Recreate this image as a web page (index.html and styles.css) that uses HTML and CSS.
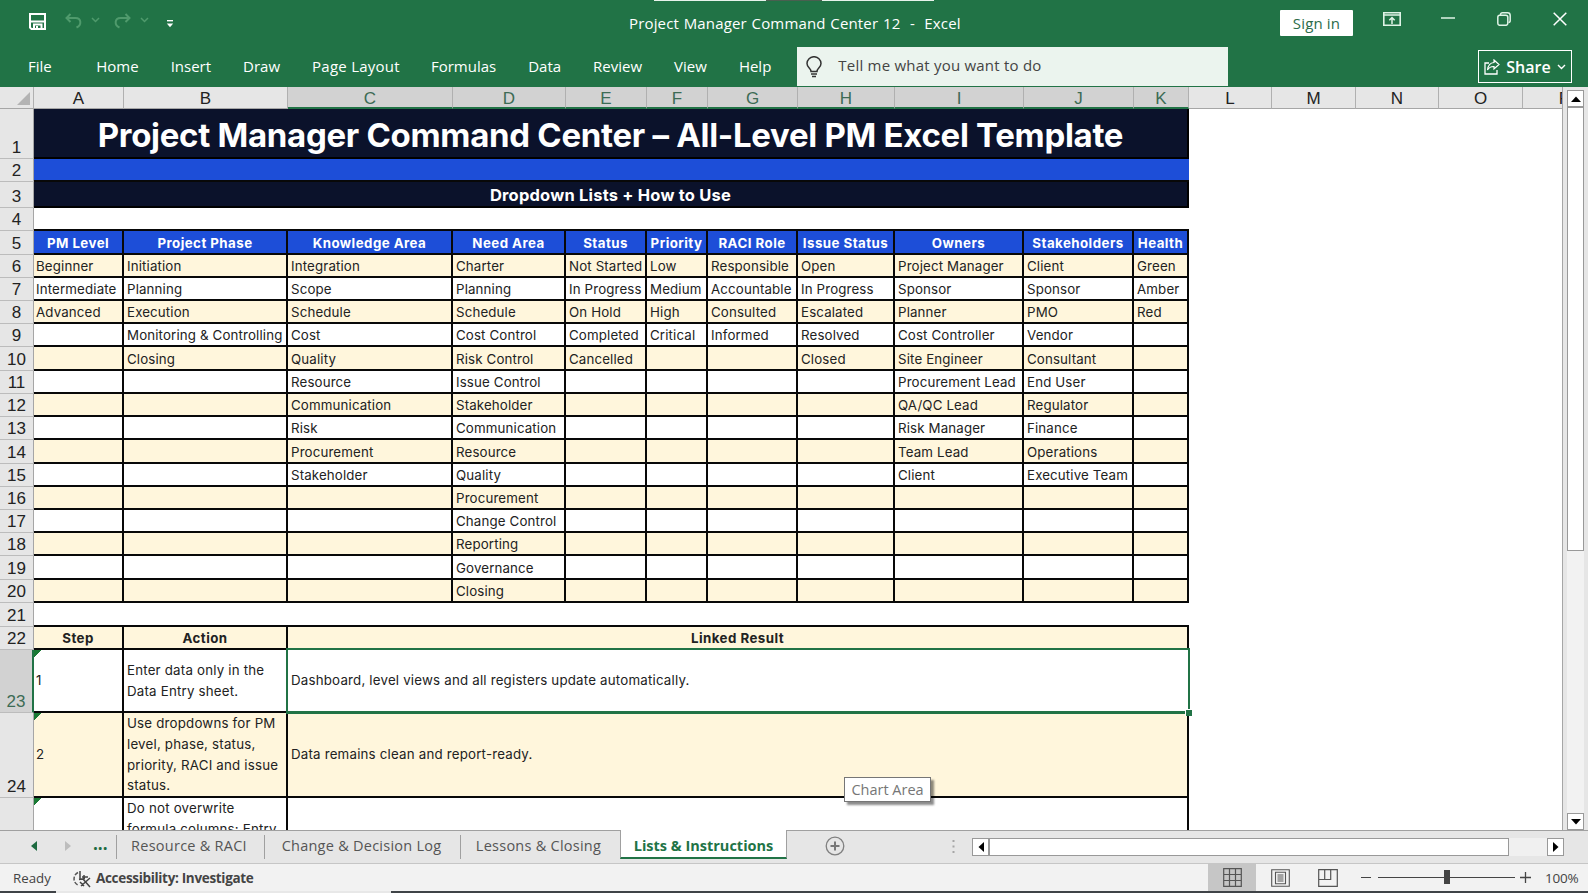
FILE: index.html
```html
<!DOCTYPE html>
<html lang="en">
<head>
    <meta charset="UTF-8">
    <meta name="viewport" content="width=device-width, initial-scale=1.0">
    <title>Project Manager Command Center 12 - Excel</title>
    <link rel="stylesheet" href="styles.css">
</head>
<body>

    <header class="titlebar">
        <div class="top-strip"><i></i><b></b><i></i></div>
        <div class="quick">
            <svg class="save" width="17" height="17" viewBox="0 0 17 17"><path d="M1 1h15v15H2.500L1 14.500zM1 8.500h15M5 16v-4.500h7.500V16" fill="none" stroke="#fff" stroke-width="2"/><path d="M7 13h2v3H7z" fill="#fff"/></svg>
            <svg class="undo" width="17" height="16" viewBox="0 0 17 16"><path d="M5.500 1L1.500 5L5.500 9M2 5h8.500c6 0 6.500 7 1 9.500" fill="none" stroke="#4f9a6c" stroke-width="2"/></svg>
            <svg class="caret" width="9" height="6" viewBox="0 0 9 6"><path d="M1 1l3.500 3.500L8 1" fill="none" stroke="#4f9a6c" stroke-width="1.500"/></svg>
            <svg class="redo" width="17" height="16" viewBox="0 0 17 16"><path d="M11.500 1l4 4l-4 4M15 5H6.500C.5 5 0 12 5.500 14.500" fill="none" stroke="#4f9a6c" stroke-width="2"/></svg>
            <svg class="caret" width="9" height="6" viewBox="0 0 9 6"><path d="M1 1l3.500 3.500L8 1" fill="none" stroke="#4f9a6c" stroke-width="1.500"/></svg>
            <svg class="more" width="8" height="8" viewBox="0 0 8 8"><path d="M1 .7h6" stroke="#fff" stroke-width="1.400"/><path d="M.8 3.500h6.400L4 7.200z" fill="#fff"/></svg>
        </div>
        <div class="doc-title">Project Manager Command Center 12&nbsp; -&nbsp; Excel</div>
        <div class="window-tools">
            <button class="signin">Sign in</button>
            <svg class="w-ribbon" width="18" height="14" viewBox="0 0 18 14"><path d="M.8.8h16.400v12.400H.8zM.8 3h16.400" fill="none" stroke="#dff3e6" stroke-width="1.600"/><path d="M9 12V6M6.300 8.300L9 5.600l2.700 2.700" fill="none" stroke="#dff3e6" stroke-width="1.500"/></svg>
            <svg class="w-min" width="14" height="14" viewBox="0 0 14 14"><path d="M0 6h14" stroke="#dff3e6" stroke-width="1.500"/></svg>
            <svg class="w-max" width="14" height="14" viewBox="0 0 14 14"><rect x=".8" y="3.300" width="10" height="10" rx="2" fill="none" stroke="#dff3e6" stroke-width="1.500"/><path d="M3.500 3V2.500Q3.500.8 5.500.8H10.500Q13.200.8 13.200 3.500V8.500Q13.200 10.500 11.500 10.500" fill="none" stroke="#dff3e6" stroke-width="1.500"/></svg>
            <svg class="w-close" width="14" height="14" viewBox="0 0 14 14"><path d="M.7.7l12.600 12.600M13.300.7L.7 13.300" stroke="#fff" stroke-width="1.500"/></svg>
        </div>
    </header>

    <nav class="ribbon">
        <a class="file">File</a>
        <a>Home</a>
        <a>Insert</a>
        <a>Draw</a>
        <a class="layout">Page Layout</a>
        <a>Formulas</a>
        <a>Data</a>
        <a>Review</a>
        <a>View</a>
        <a>Help</a>
        <div class="tellme">
            <svg width="16" height="22" viewBox="0 0 16 22"><path d="M5 15.500C5 12.500 1 11.500 1 7.500a7 6.800 0 0 1 14 0c0 4-4 5-4 8zM5 18h6M6 20.500h4" fill="none" stroke="#333" stroke-width="1.500"/></svg>
            <span>Tell me what you want to do</span>
        </div>
        <button class="share">
            <svg width="16" height="16" viewBox="0 0 16 16"><path d="M5 4H1v11h12v-4" fill="none" stroke="#fff" stroke-width="1.300"/><path d="M10 1l5 4.500-5 4.500V7.500C7 7.300 5 8.500 3.500 11 4 6.500 6 3.800 10 3.500z" fill="none" stroke="#fff" stroke-width="1.200"/></svg>
            <span>Share</span>
            <svg width="9" height="6" viewBox="0 0 9 6"><path d="M1 1l3.500 3.500L8 1" fill="none" stroke="#fff" stroke-width="1.400"/></svg>
        </button>
    </nav>

    <main class="workspace">
        <div class="sheet">
            <table>
                <colgroup>
                    <col class="c-num"><col class="c-a"><col class="c-b"><col class="c-c"><col class="c-d"><col class="c-e"><col class="c-f"><col class="c-g"><col class="c-h"><col class="c-i"><col class="c-j"><col class="c-k"><col class="c-l"><col class="c-m"><col class="c-l"><col class="c-m"><col class="c-m">
                </colgroup>
                <tr class="letters">
                    <th class="corner"><svg width="13" height="13" viewBox="0 0 13 13"><path d="M13 0v13H0z" fill="#b3b3b3"/></svg></th>
                    <th>A</th><th>B</th>
                    <th class="on">C</th><th class="on">D</th><th class="on">E</th><th class="on">F</th><th class="on">G</th><th class="on">H</th><th class="on">I</th><th class="on">J</th><th class="on">K</th>
                    <th>L</th><th>M</th><th>N</th><th>O</th><th>P</th>
                </tr>
                <tr class="r-title"><th>1</th><td colspan="11">Project Manager Command Center – All-Level PM Excel Template</td></tr>
                <tr class="r-blue"><th>2</th><td colspan="11"></td></tr>
                <tr class="r-sub"><th>3</th><td colspan="11">Dropdown Lists + How to Use</td></tr>
                <tr class="r-gap"><th>4</th><td colspan="11"></td></tr>
                <tr class="r-head"><th>5</th><td>PM Level</td><td>Project Phase</td><td>Knowledge Area</td><td>Need Area</td><td>Status</td><td>Priority</td><td>RACI Role</td><td>Issue Status</td><td>Owners</td><td>Stakeholders</td><td>Health</td></tr>
                <tr class="cream"><th>6</th><td>Beginner</td><td>Initiation</td><td>Integration</td><td>Charter</td><td>Not Started</td><td>Low</td><td>Responsible</td><td>Open</td><td>Project Manager</td><td>Client</td><td>Green</td></tr>
                <tr><th>7</th><td>Intermediate</td><td>Planning</td><td>Scope</td><td>Planning</td><td>In Progress</td><td>Medium</td><td>Accountable</td><td>In Progress</td><td>Sponsor</td><td>Sponsor</td><td>Amber</td></tr>
                <tr class="cream"><th>8</th><td>Advanced</td><td>Execution</td><td>Schedule</td><td>Schedule</td><td>On Hold</td><td>High</td><td>Consulted</td><td>Escalated</td><td>Planner</td><td>PMO</td><td>Red</td></tr>
                <tr><th>9</th><td></td><td>Monitoring &amp; Controlling</td><td>Cost</td><td>Cost Control</td><td>Completed</td><td>Critical</td><td>Informed</td><td>Resolved</td><td>Cost Controller</td><td>Vendor</td><td></td></tr>
                <tr class="cream tall"><th>10</th><td></td><td>Closing</td><td>Quality</td><td>Risk Control</td><td>Cancelled</td><td></td><td></td><td>Closed</td><td>Site Engineer</td><td>Consultant</td><td></td></tr>
                <tr><th>11</th><td></td><td></td><td>Resource</td><td>Issue Control</td><td></td><td></td><td></td><td></td><td>Procurement Lead</td><td>End User</td><td></td></tr>
                <tr class="cream"><th>12</th><td></td><td></td><td>Communication</td><td>Stakeholder</td><td></td><td></td><td></td><td></td><td>QA/QC Lead</td><td>Regulator</td><td></td></tr>
                <tr><th>13</th><td></td><td></td><td>Risk</td><td>Communication</td><td></td><td></td><td></td><td></td><td>Risk Manager</td><td>Finance</td><td></td></tr>
                <tr class="cream tall"><th>14</th><td></td><td></td><td>Procurement</td><td>Resource</td><td></td><td></td><td></td><td></td><td>Team Lead</td><td>Operations</td><td></td></tr>
                <tr><th>15</th><td></td><td></td><td>Stakeholder</td><td>Quality</td><td></td><td></td><td></td><td></td><td>Client</td><td>Executive Team</td><td></td></tr>
                <tr class="cream"><th>16</th><td></td><td></td><td></td><td>Procurement</td><td></td><td></td><td></td><td></td><td></td><td></td><td></td></tr>
                <tr><th>17</th><td></td><td></td><td></td><td>Change Control</td><td></td><td></td><td></td><td></td><td></td><td></td><td></td></tr>
                <tr class="cream"><th>18</th><td></td><td></td><td></td><td>Reporting</td><td></td><td></td><td></td><td></td><td></td><td></td><td></td></tr>
                <tr class="tall"><th>19</th><td></td><td></td><td></td><td>Governance</td><td></td><td></td><td></td><td></td><td></td><td></td><td></td></tr>
                <tr class="cream"><th>20</th><td></td><td></td><td></td><td>Closing</td><td></td><td></td><td></td><td></td><td></td><td></td><td></td></tr>
                <tr class="r-gap tall"><th>21</th><td colspan="11"></td></tr>
                <tr class="r-steps"><th>22</th><td>Step</td><td>Action</td><td colspan="9">Linked Result</td></tr>
                <tr class="r-one"><th class="on">23</th><td class="flag">1</td><td>Enter data only in the Data Entry sheet.</td><td colspan="9" class="selected">Dashboard, level views and all registers update automatically.<i class="outline"></i><i class="handle"></i></td></tr>
                <tr class="r-two cream"><th>24</th><td class="flag">2</td><td>Use dropdowns for PM level, phase, status, priority, RACI and issue status.</td><td colspan="9">Data remains clean and report-ready.</td></tr>
                <tr class="r-three"><th></th><td class="flag"></td><td>Do not overwrite<br>formula columns: Entry</td><td colspan="9"></td></tr>
            </table>
            <div class="tooltip">Chart Area</div>
        </div>
        <div class="vscroll">
            <div class="sbtn"><svg width="10" height="6" viewBox="0 0 10 6"><path d="M0 6l5-5.500L10 6z"/></svg></div>
            <div class="vthumb"></div>
            <div class="sbtn down"><svg width="10" height="6" viewBox="0 0 10 6"><path d="M0 0l5 5.500L10 0z"/></svg></div>
        </div>
    </main>

    <div class="tabs">
        <div class="tab-nav">
            <svg width="6" height="10" viewBox="0 0 6 10"><path d="M6 0v10L0 5z" fill="#1e6b41"/></svg>
            <svg width="6" height="10" viewBox="0 0 6 10"><path d="M0 0v10l6-5z" fill="#bdbdbd"/></svg>
            <span>...</span>
        </div>
        <div class="tab t1">Resource &amp; RACI</div>
        <div class="tab t2">Change &amp; Decision Log</div>
        <div class="tab t3">Lessons &amp; Closing</div>
        <div class="tab active">Lists &amp; Instructions</div>
        <svg class="add" width="20" height="20" viewBox="0 0 20 20"><circle cx="10" cy="10" r="8.800" fill="none" stroke="#808080" stroke-width="1.300"/><path d="M10 5.500v9M5.500 10h9" stroke="#777" stroke-width="2"/></svg>
        <svg class="grip" width="3" height="13" viewBox="0 0 3 13"><path d="M.5 0h2v2h-2zM.5 5.500h2v2h-2zM.5 11h2v2h-2z" fill="#a6a6a6"/></svg>
        <div class="hscroll">
            <div class="sbtn"><svg width="6" height="10" viewBox="0 0 6 10"><path d="M6 0v10L.5 5z"/></svg></div>
            <div class="hthumb"></div>
            <div class="sbtn right"><svg width="6" height="10" viewBox="0 0 6 10"><path d="M0 0v10l5.500-5z"/></svg></div>
        </div>
    </div>

    <footer class="status">
        <span class="ready">Ready</span>
        <svg class="acc-icon" width="20" height="18" viewBox="0 0 20 18"><path d="M6 2.500A7 7 0 0 0 7 15.500" fill="none" stroke="#555" stroke-width="1.500" stroke-dasharray="4 1.500"/><path d="M8 1v8M7 9.500l6-1M12 5v4M10 7h6M9 16l9-8M10.500 8.500L18 17M8 12l4 4" fill="none" stroke="#444" stroke-width="1.500"/></svg>
        <span class="acc">Accessibility: Investigate</span>
        <div class="view on"><svg width="19" height="19" viewBox="0 0 19 19"><path d="M.7.700h17.600v17.600H.7zM6.500.7v17.600M12.500.7v17.600M.7 6.500h17.600M.7 12.500h17.600" fill="none" stroke="#555" stroke-width="1.200"/></svg></div>
        <div class="view"><svg width="19" height="18" viewBox="0 0 19 18"><path d="M.7.7h17.600v16.600H.7zM4.500 3.200h10v11.600h-10zM6.500 6h6M6.500 8h6M6.500 10h6M6.500 12h6" fill="none" stroke="#555" stroke-width="1.100"/></svg></div>
        <div class="view"><svg width="20" height="18" viewBox="0 0 20 18"><path d="M.7.7h18.600v16.600H.7zM.7 10.500h12V.7M6.700.7v9.800" fill="none" stroke="#555" stroke-width="1.200"/></svg></div>
        <div class="zoom-minus"></div>
        <div class="slider"><i></i></div>
        <svg class="zoom-plus" width="11" height="11" viewBox="0 0 11 11"><path d="M5.500 0v11M0 5.500h11" stroke="#444" stroke-width="1.300"/></svg>
        <span class="percent">100%</span>
    </footer>
    <div class="taskline"></div>

</body>
</html>
```
FILE: styles.css
```css
* {
    box-sizing: border-box;
}
body {
    margin: 0;
    width: 1588px;
    height: 893px;
    overflow: hidden;
    display: flex;
    flex-direction: column;
    background-color: #e6e6e6;
    font-family: "Open Sans", "Noto Sans", sans-serif;
}
svg {
    display: block;
    flex: none;
}
button {
    font-family: inherit;
}

/* title bar */
.titlebar {
    position: relative;
    height: 47px;
    flex: none;
    background-color: #217346;
    color: #fff;
}
.top-strip {
    position: absolute;
    top: 0;
    left: 654px;
    display: flex;
}
.top-strip i {
    width: 112px;
    height: 1px;
    background-color: #e8f3ec;
}
.top-strip b {
    width: 56px;
    height: 1px;
    background-color: #4a5f50;
}
.quick {
    position: absolute;
    left: 29px;
    top: 12px;
    height: 18px;
    display: flex;
    align-items: center;
}
.undo {
    margin-left: 19px;
}
.redo {
    margin-left: 14px;
}
.caret {
    margin-left: 9px;
    margin-top: -2px;
}
.more {
    margin-left: 17px;
    margin-top: 5px;
}
.doc-title {
    position: absolute;
    left: 629px;
    top: 11px;
    font-size: 15px;
    line-height: 24px;
    white-space: nowrap;
    letter-spacing: 0.15px;
    word-spacing: 0.7px;
}
.window-tools {
    position: absolute;
    left: 1280px;
    top: 10px;
    display: flex;
}
.signin {
    width: 73px;
    height: 26px;
    padding: 0;
    border: none;
    border-radius: 1px;
    background-color: #fff;
    color: #2b6c4a;
    font-size: 15px;
    letter-spacing: 0.15px;
}
.w-ribbon {
    margin: 2px 0 0 30px;
}
.w-min {
    margin: 2px 0 0 40px;
}
.w-max {
    margin: 2px 0 0 42px;
}
.w-close {
    margin: 2px 0 0 42px;
}

/* ribbon */
.ribbon {
    height: 40px;
    flex: none;
    display: flex;
    align-items: center;
    padding: 0 16px 0 28px;
    gap: 32px;
    background-color: #217346;
    color: #fff;
    font-size: 15px;
}
.ribbon a {
    margin-top: -2px;
    white-space: nowrap;
}
.ribbon .file {
    margin-right: 12.5px;
}
.ribbon .layout {
    margin-right: -1px;
    letter-spacing: 0.25px;
}
.tellme {
    width: 431px;
    height: 39px;
    flex: none;
    margin-left: -6px;
    margin-bottom: 1px;
    padding-left: 9px;
    display: flex;
    align-items: center;
    gap: 16px;
    background-color: #ebf4ee;
    color: #444;
}
.tellme span {
    margin-top: -3px;
    letter-spacing: 0.22px;
}
.share {
    margin-left: auto;
    margin-bottom: 1px;
    width: 94px;
    height: 33px;
    padding: 0 5px;
    display: flex;
    align-items: center;
    justify-content: space-between;
    border: 1px solid #fff;
    background: none;
    color: #fff;
    font-size: 16px;
    font-weight: 600;
}

/* sheet */
.workspace {
    height: 743px;
    flex: none;
    display: flex;
}
.sheet {
    position: relative;
    width: 1563px;
    overflow: hidden;
    background-color: #fff;
    border-right: 1px solid #a6a6a6;
}
table {
    width: 1607px;
    table-layout: fixed;
    border-collapse: separate;
    border-spacing: 0;
}
.c-num { width: 34px; }
.c-a { width: 90px; }
.c-b { width: 164px; }
.c-c { width: 165px; }
.c-d { width: 113px; }
.c-e { width: 81px; }
.c-f { width: 61px; }
.c-g { width: 90px; }
.c-h { width: 97px; }
.c-i { width: 129px; }
.c-j { width: 110px; }
.c-k { width: 55px; }
.c-l { width: 83px; }
.c-m { width: 84px; }

tr {
    height: 23px;
}
tr.tall {
    height: 24px;
}
th {
    padding: 0 0 1px;
    background-color: #e6e6e6;
    border-right: 1px solid #a6a6a6;
    border-bottom: 1px solid #bcbcbc;
    color: #222;
    font-family: "Liberation Sans", Arial, sans-serif;
    font-size: 17px;
    font-weight: normal;
    line-height: 18px;
    vertical-align: bottom;
}
th.on {
    background-color: #d2d2d2;
    color: #3d6b55;
    border-right: 2px solid #217346;
}
.letters {
    height: 22px;
}
.letters th {
    padding: 0;
    border-right: 1px solid #b0b0b0;
    border-bottom: 1px solid #a6a6a6;
}
.letters th.on {
    border-bottom: 2px solid #217346;
    line-height: 17px;
}
.corner svg {
    margin: 0 0 3px 17px;
}
td {
    padding: 1px 0 0 3px;
    border-right: 2px solid #080808;
    border-bottom: 2px solid #080808;
    background-color: #fff;
    color: #222;
    font-family: Inter, "Open Sans", sans-serif;
    font-size: 13.3px;
    letter-spacing: 0.14px;
    line-height: 20px;
    white-space: nowrap;
}
td:nth-child(2) {
    padding-left: 2px;
}
.cream td {
    background-color: #fff6dc;
}
.r-title {
    height: 50px;
}
.r-title td,
.r-sub td {
    background-color: #0b122b;
    border-color: #000;
    color: #fff;
    text-align: center;
    font-weight: bold;
}
.r-title td {
    padding: 3px 0 0;
    font-size: 33px;
    letter-spacing: -0.3px;
    line-height: 40px;
}
.r-blue td {
    background-color: #1d4ed8;
    border-right: none;
}
.r-sub {
    height: 26px;
}
.r-sub td {
    padding: 2px 0 0;
    font-size: 16.5px;
    letter-spacing: 0.2px;
}
.r-gap td {
    border-right: none;
}
.r-head {
    height: 24px;
}
.r-head td {
    padding: 1px 0 0;
    background-color: #1d4ed8;
    color: #fff;
    text-align: center;
    font-weight: bold;
    letter-spacing: 0.45px;
}
.r-steps td {
    padding: 0;
    background-color: #fff6dc;
    text-align: center;
    font-weight: bold;
    letter-spacing: 0.45px;
}
.r-one {
    height: 63px;
}
.r-two {
    height: 85px;
}
.r-three {
    height: 85px;
}
.r-one td,
.r-two td,
.r-three td {
    padding-top: 0;
    line-height: 20.7px;
    white-space: normal;
    letter-spacing: 0.2px;
}
.r-three td {
    vertical-align: top;
}
.flag {
    background-image: linear-gradient(135deg, #1a7a35 5px, transparent 5.500px);
}
.selected {
    position: relative;
    border-right-color: #fff;
    border-bottom-color: #217346;
}
.outline {
    position: absolute;
    top: -2px;
    left: -2px;
    right: -3px;
    bottom: -3px;
    border: 2px solid #217346;
}
.handle {
    position: absolute;
    right: -5px;
    bottom: -5px;
    width: 7px;
    height: 7px;
    border: 1px solid #fff;
    border-right: none;
    border-bottom: none;
    background-color: #217346;
}
.tooltip {
    position: absolute;
    left: 844px;
    top: 690px;
    width: 87px;
    height: 25px;
    border: 1px solid #767676;
    background-color: #fff;
    box-shadow: 3px 3px 2px rgba(0, 0, 0, 0.45);
    color: #767676;
    font-size: 14.5px;
    line-height: 24px;
    text-align: center;
    white-space: nowrap;
}

/* scrollbars */
.vscroll {
    width: 17px;
    margin: 3px 0 0 4px;
    display: flex;
    flex-direction: column;
    background-color: #f2f2f2;
}
.sbtn {
    width: 17px;
    height: 17px;
    flex: none;
    display: flex;
    align-items: center;
    justify-content: center;
    border: 1px solid #999;
    background-color: #fff;
}
.vthumb {
    height: 444px;
    border: 1px solid #999;
    background-color: #fff;
}
.down {
    margin-top: auto;
}

/* sheet tabs */
.tabs {
    height: 34px;
    flex: none;
    display: flex;
    border-top: 1px solid #a0a0a0;
    border-bottom: 1px solid #c6c6c6;
    background-color: #e6e6e6;
    color: #555;
    font-size: 14.5px;
}
.tab-nav {
    width: 116px;
    height: 30px;
    padding-left: 31px;
    display: flex;
    align-items: center;
    gap: 28px;
}
.tab-nav span {
    margin: -6px 0 0 -6px;
    color: #1e6b41;
    font-weight: bold;
    font-size: 17px;
}
.tab {
    height: 24px;
    margin-top: 4px;
    line-height: 22px;
    border-left: 1px solid #a0a0a0;
    text-align: center;
    white-space: nowrap;
    letter-spacing: 0.25px;
}
.t1 {
    width: 148px;
    padding-right: 3px;
}
.t2 {
    width: 196px;
    padding-right: 2px;
}
.t3 {
    width: 160px;
    padding-right: 4px;
}
.active {
    width: 167px;
    height: 29px;
    margin-top: -1px;
    line-height: 32px;
    border-right: 1px solid #a0a0a0;
    border-bottom: 2px solid #217346;
    background-color: #fff;
    color: #217346;
    font-weight: bold;
    letter-spacing: 0;
}
.add {
    margin: 5px 0 0 38px;
}
.grip {
    margin: 9px 0 0 107px;
}
.hscroll {
    width: 592px;
    height: 18px;
    margin: 7px 0 0 17px;
    display: flex;
    background-color: #f0f0f0;
}
.hscroll .sbtn {
    height: 18px;
}
.hthumb {
    width: 520px;
    border: 1px solid #999;
    background-color: #fff;
}
.right {
    margin-left: auto;
}

/* status bar */
.status {
    height: 27px;
    flex: none;
    display: flex;
    align-items: center;
    background-color: #f2f2f2;
    color: #444;
    font-size: 13.5px;
}
.ready {
    width: 59px;
    margin: 1px 0 0 13px;
    font-size: 13.3px;
}
.acc {
    width: 1112px;
    margin-left: 4px;
    font-weight: bold;
    letter-spacing: -0.32px;
}
.acc-icon {
    margin-top: 2px;
}
.view {
    width: 48px;
    height: 27px;
    flex: none;
    display: flex;
    align-items: center;
    justify-content: center;
}
.view.on {
    background-color: #c6c6c6;
}
.zoom-minus {
    width: 10px;
    height: 1px;
    margin-left: 9px;
    background-color: #444;
}
.slider {
    position: relative;
    width: 137px;
    height: 1px;
    margin-left: 7px;
    background-color: #444;
}
.slider i {
    position: absolute;
    left: 66px;
    top: -7px;
    width: 6px;
    height: 14px;
    background-color: #444;
}
.zoom-plus {
    margin-left: 5px;
}
.percent {
    margin-left: 14px;
    letter-spacing: -0.2px;
}
.taskline {
    height: 2px;
    flex: none;
    background: linear-gradient(90deg, #3f4347 56px, #e8e8e8 56px, #e8e8e8 391px, #3f4347 391px);
}
```
